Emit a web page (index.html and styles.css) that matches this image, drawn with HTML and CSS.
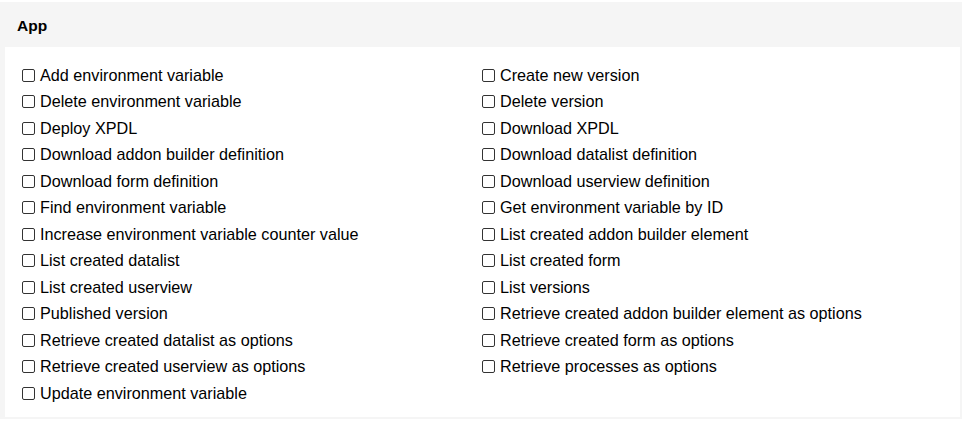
FILE: index.html
```html
<!DOCTYPE html>
<html>
<head>
<meta charset="utf-8">
<link rel="stylesheet" href="styles.css">
</head>
<body>
<div class="card">
  <div class="card-header">App</div>
  <div class="card-body">
    <label class="item"><input type="checkbox"><span>Add environment variable</span></label>
    <label class="item"><input type="checkbox"><span>Create new version</span></label>
    <label class="item"><input type="checkbox"><span>Delete environment variable</span></label>
    <label class="item"><input type="checkbox"><span>Delete version</span></label>
    <label class="item"><input type="checkbox"><span>Deploy XPDL</span></label>
    <label class="item"><input type="checkbox"><span>Download XPDL</span></label>
    <label class="item"><input type="checkbox"><span>Download addon builder definition</span></label>
    <label class="item"><input type="checkbox"><span>Download datalist definition</span></label>
    <label class="item"><input type="checkbox"><span>Download form definition</span></label>
    <label class="item"><input type="checkbox"><span>Download userview definition</span></label>
    <label class="item"><input type="checkbox"><span>Find environment variable</span></label>
    <label class="item"><input type="checkbox"><span>Get environment variable by ID</span></label>
    <label class="item"><input type="checkbox"><span>Increase environment variable counter value</span></label>
    <label class="item"><input type="checkbox"><span>List created addon builder element</span></label>
    <label class="item"><input type="checkbox"><span>List created datalist</span></label>
    <label class="item"><input type="checkbox"><span>List created form</span></label>
    <label class="item"><input type="checkbox"><span>List created userview</span></label>
    <label class="item"><input type="checkbox"><span>List versions</span></label>
    <label class="item"><input type="checkbox"><span>Published version</span></label>
    <label class="item"><input type="checkbox"><span>Retrieve created addon builder element as options</span></label>
    <label class="item"><input type="checkbox"><span>Retrieve created datalist as options</span></label>
    <label class="item"><input type="checkbox"><span>Retrieve created form as options</span></label>
    <label class="item"><input type="checkbox"><span>Retrieve created userview as options</span></label>
    <label class="item"><input type="checkbox"><span>Retrieve processes as options</span></label>
    <label class="item"><input type="checkbox"><span>Update environment variable</span></label>
  </div>
</div>
</body>
</html>
```

FILE: styles.css
```css
html, body {
  margin: 0;
  padding: 0;
  background: #ffffff;
}
body {
  font-family: "Liberation Sans", Arial, sans-serif;
  color: #000000;
}
.card {
  margin-top: 2px;
  width: 962px;
  height: 417px;
  background: #f5f5f5;
  display: flex;
  flex-direction: column;
}
.card-header {
  height: 45px;
  flex: none;
  box-sizing: border-box;
  display: flex;
  align-items: center;
  padding: 3px 0 0 17px;
  font-size: 15.5px;
  font-weight: bold;
}
.card-body {
  flex: 1;
  margin: 0 2px 2px 5px;
  background: #ffffff;
  padding: 15px 18px 0 17px;
  display: grid;
  grid-template-columns: 1fr 1fr;
  grid-auto-rows: 26.5px;
  align-content: start;
}
.item {
  display: flex;
  align-items: center;
  font-size: 16.2px;
  white-space: nowrap;
}
.item input {
  appearance: none;
  -webkit-appearance: none;
  box-sizing: border-box;
  margin: 0 5px 0 0;
  width: 13px;
  height: 13px;
  border: 1px solid #333333;
  border-radius: 2px;
  background: #ffffff;
  flex: none;
}
```
